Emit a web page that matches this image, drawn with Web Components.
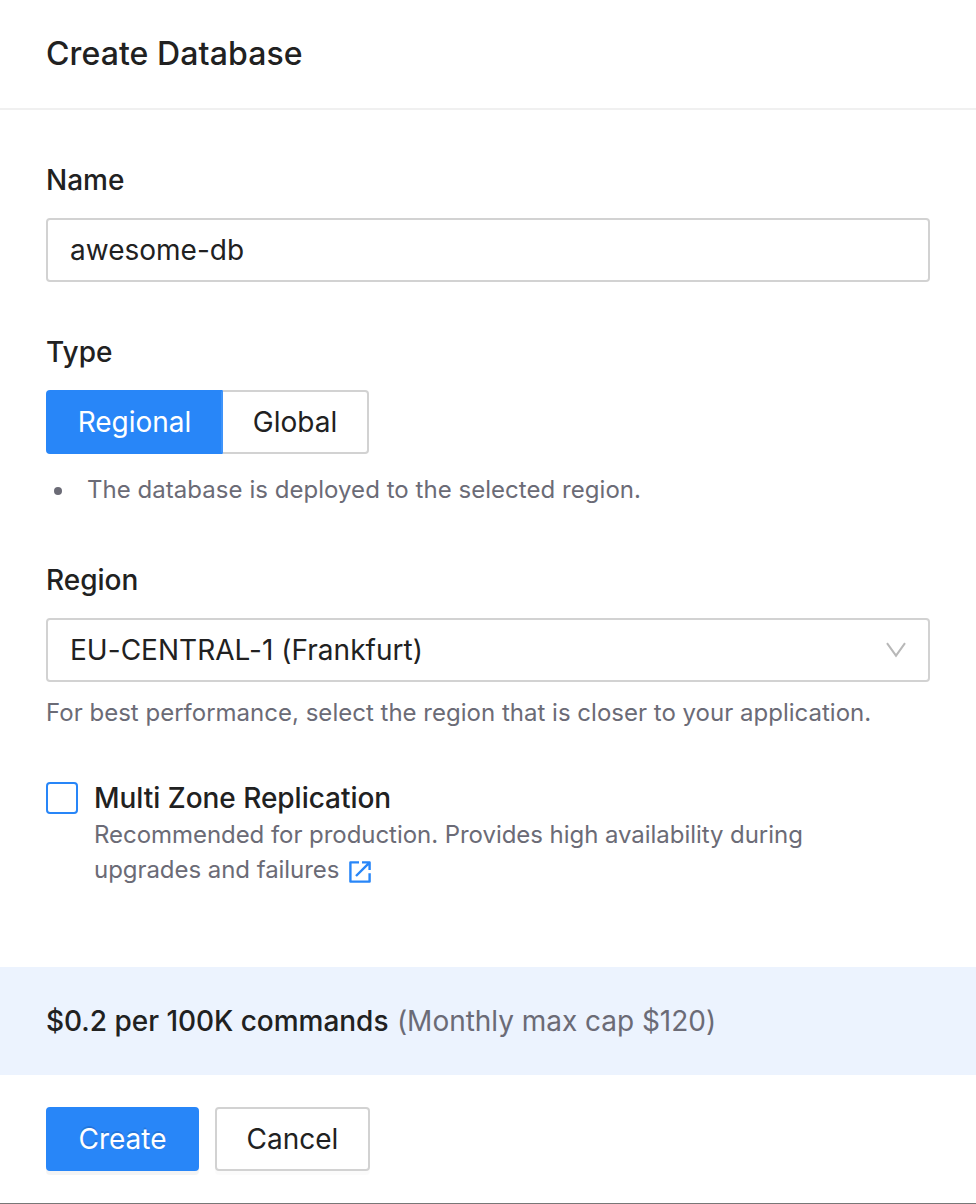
<!DOCTYPE html>
<html lang="en">
<head>
<meta charset="utf-8">
<title>Create Database</title>
<style>
html,body{margin:0;height:100%}
body{font-family:Inter,"Liberation Sans",sans-serif;font-size:28px;line-height:44px;color:#212121;background:#fff}
</style>
</head>
<body>
<create-dialog heading="Create Database">
  <form-field label="Name"><text-input value="awesome-db"></text-input></form-field>
  <form-field label="Type" style="margin-top:48px">
    <option-switch></option-switch>
    <note-list slot="help">The database is deployed to the selected region.</note-list>
  </form-field>
  <form-field label="Region" style="margin-top:49px">
    <region-select>EU-CENTRAL-1 (Frankfurt)</region-select>
    <help-text slot="help">For best performance, select the region that is closer to your application.</help-text>
  </form-field>
  <check-option label="Multi Zone Replication"></check-option>
  <price-banner slot="price" price="$0.2 per 100K commands">(Monthly max cap $120)</price-banner>
  <action-button slot="actions" primary style="width:153px">Create</action-button>
  <action-button slot="actions" style="width:155px">Cancel</action-button>
</create-dialog>
<script>
const define = (name, html) => customElements.define(name, class extends HTMLElement {
  constructor() {
    super();
    const t = document.createElement('template');
    t.innerHTML = html;
    this.attachShadow({mode: 'open'}).append(t.content.cloneNode(true));
    this.shadowRoot.querySelectorAll('[data-attr]').forEach(n => {
      n.textContent = this.getAttribute(n.dataset.attr);
    });
  }
});

define('create-dialog', `<style>
:host{display:flex;flex-direction:column;box-sizing:border-box;height:1204px;background:#fff;border-bottom:1px solid #777}
header{box-sizing:border-box;height:110px;padding:32px 46px 0;border-bottom:2px solid #f0f0f0}
h1{margin:0;font-size:32px;line-height:44px;font-weight:500;letter-spacing:.1px}
main{box-sizing:border-box;height:857px;padding:48px 46px 0}
footer{display:flex;gap:16px;padding:32px 46px 0}
</style><header><h1 data-attr="heading"></h1></header><main><slot></slot></main><slot name="price"></slot><footer><slot name="actions"></slot></footer>`);

define('form-field', `<style>
:host{display:block}
label{display:block;height:44px;font-weight:500;margin-bottom:16px}
</style><label data-attr="label"></label><slot></slot><slot name="help"></slot>`);

define('text-input', `<style>
:host{display:flex;align-items:center;box-sizing:border-box;height:64px;padding:0 22px;border:2px solid #d2d2d2;border-radius:4px}
</style><span data-attr="value"></span>`);

define('option-switch', `<style>
:host{display:flex;height:64px}
span{display:flex;align-items:center;justify-content:center;box-sizing:border-box;border:2px solid #d2d2d2}
.on{width:177px;background:#2886f8;border-color:#2886f8;border-right-color:#3f94fa;color:#fff;border-radius:4px 0 0 4px}
.off{width:146px;border-left:0;border-radius:0 4px 4px 0}
</style><span class="on">Regional</span><span class="off">Global</span>`);

define('note-list', `<style>
:host{display:block;color:#6b6b76;font-size:24px;line-height:38px;padding-top:17px;letter-spacing:.04px}
ul{margin:0;padding:0;list-style:none}
li{display:flex;align-items:center;gap:25px;padding-left:8px}
i{width:8px;height:8px;border-radius:50%;background:currentColor;margin-top:2px}
</style><ul><li><i></i><span><slot></slot></span></li></ul>`);

define('region-select', `<style>
:host{display:flex;align-items:center;justify-content:space-between;box-sizing:border-box;height:64px;padding:0 22px;border:2px solid #d2d2d2;border-radius:4px;letter-spacing:.03px}
svg{width:20px;height:16px}
</style><span><slot></slot></span><svg viewBox="0 0 20 16"><path d="M1 1.2 10 13.7 19 1.2" fill="none" stroke="#b8b8b8" stroke-width="2"/></svg>`);

define('help-text', `<style>
:host{display:block;color:#6b6b76;font-size:24px;line-height:38px;padding-top:12px;letter-spacing:.01px}
</style><slot></slot>`);

define('check-option', `<style>
:host{display:flex;gap:16px;margin-top:44px}
.box{flex:none;box-sizing:border-box;width:32px;height:32px;margin-top:6px;border:2px solid #2886f8;border-radius:4px}
.title{font-weight:500;height:41px;letter-spacing:-.03px}
p{margin:0;color:#6b6b76;font-size:24px;line-height:35px;letter-spacing:-.05px}
svg{width:24px;height:24px;vertical-align:-6px;margin-left:2px}
</style><span class="box"></span><div><div class="title" data-attr="label"></div>
<p>Recommended for production. Provides high availability during<br>upgrades and failures <svg viewBox="0 0 24 24" fill="none" stroke="#2886f8" stroke-width="2.4" stroke-linejoin="round"><path d="M11 2.4H2.4V21.6H21.6V13.2M14 2.4H21.6V10M21.2 2.8 8 16"/></svg></p></div>`);

define('price-banner', `<style>
:host{display:flex;align-items:center;gap:8.5px;box-sizing:border-box;height:108px;padding:0 46px;background:#ecf3fe;letter-spacing:-.03px}
b{font-weight:500}span{color:#6b6b76}
</style><b data-attr="price"></b><span><slot></slot></span>`);

define('action-button', `<style>
:host{display:flex;align-items:center;justify-content:center;box-sizing:border-box;height:64px;border:2px solid #d2d2d2;border-radius:4px;box-shadow:0 4px 0 rgba(0,0,0,.016)}
:host([primary]){background:#2886f8;border-color:#2886f8;color:#fff;text-shadow:0 -2px 0 rgba(0,0,0,.12);box-shadow:0 4px 0 rgba(0,0,0,.043)}
</style><slot></slot>`);
</script>
</body>
</html>
